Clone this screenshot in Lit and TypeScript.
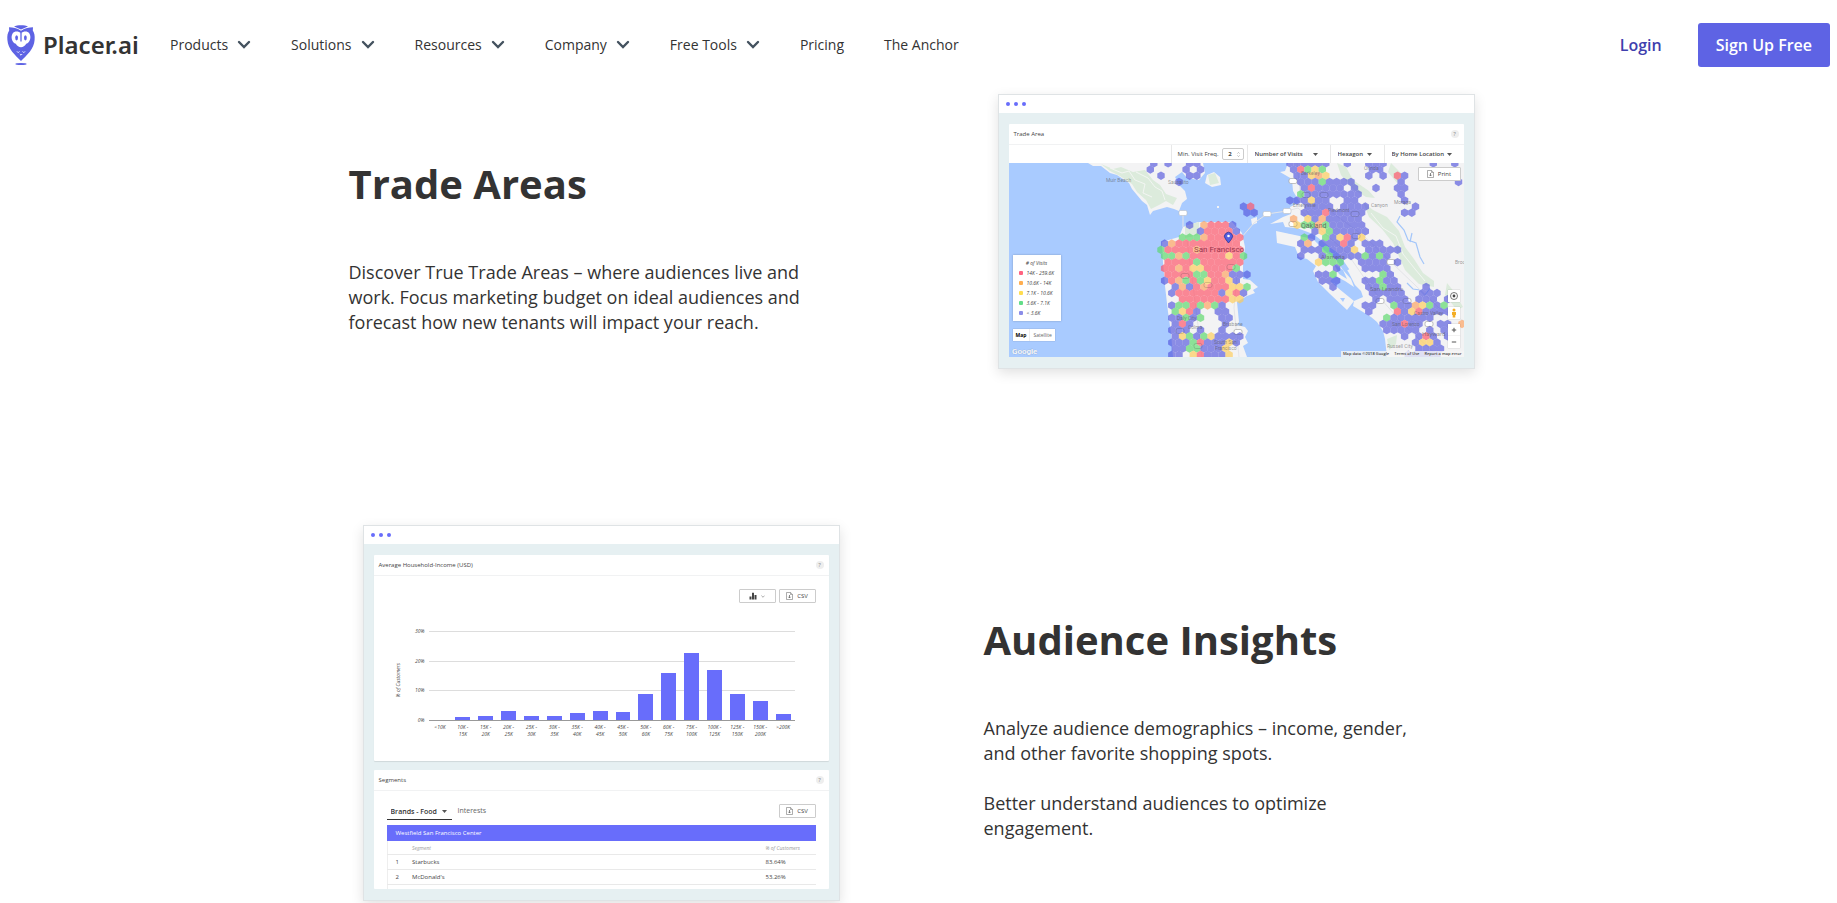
import { LitElement, html, css, svg } from "lit";
import { customElement } from "lit/decorators.js";

const chevron = html`<svg class="chevron" viewBox="0 0 14 10" width="14" height="10" aria-hidden="true">
  <path d="M2 2 L7 7 L12 2" fill="none" stroke="#44525f" stroke-width="2.4" stroke-linecap="round" stroke-linejoin="miter" />
</svg>`;

const caret = html`<svg class="caret" viewBox="0 0 5 3" width="5" height="3" aria-hidden="true"><path d="M0 0H5L2.5 3Z" fill="#555" /></svg>`;

const fileIcon = html`<svg viewBox="0 0 7 8" width="7" height="8" aria-hidden="true">
  <path d="M.5 .5H4.6L6.5 2.4V7.5H.5Z M4.5 .5V2.5H6.5" fill="none" stroke="#777" stroke-width=".6" />
  <path d="M3.5 3V5.8M2.4 4.8L3.5 6L4.6 4.8" fill="none" stroke="#555" stroke-width=".7" />
</svg>`;

@customElement("site-header")
export class SiteHeader extends LitElement {
  static styles = css`
    :host { display: block; background: #fff; }
    header { display: flex; align-items: center; height: 90px; padding: 0 7px; box-sizing: border-box; }
    a { text-decoration: none; color: #333; }
    .logo { display: flex; align-items: center; gap: 8px; width: 142px; font-family: "Noto Sans", "Open Sans", sans-serif; font-weight: 600; font-size: 24px; line-height: 36px; white-space: nowrap; }
    nav { display: flex; gap: 40px; padding-left: 21px; }
    .item { display: flex; align-items: center; gap: 9px; border: 0; background: none; padding: 0; margin: 0; font-family: "Open Sans", sans-serif; font-size: 14px; line-height: 20px; color: #333; cursor: pointer; white-space: nowrap; }
    .right { display: flex; align-items: center; gap: 36px; margin-left: auto; font-size: 16px; font-weight: 600; }
    .login { color: #3f3fae; }
    .signup { background: #5e63e4; color: #fff; border-radius: 3px; padding: 0 18px; line-height: 44px; }
  `;
  render() {
    const menus = ["Products", "Solutions", "Resources", "Company", "Free Tools"];
    return html`<header>
      <a class="logo" href="#home" aria-label="Placer.ai">
        <svg viewBox="0 0 28 40" width="28" height="40" aria-hidden="true">
          <path d="M7 1.6 C10 -.2 18 -.2 21 1.6 L14 4.4Z" fill="#5e63e4" />
          <path d="M2 2.2 C6 2.4 10 2.6 14 5.8 C18 2.6 22 2.4 26 2.2 L25.8 5.6 C27.4 8 28 11 27.6 15 C27 24 20 30 14 36 C8 30 1 24 .4 15 C0 11 .6 8 2.2 5.6Z" fill="#5e63e4" />
          <path d="M14 8.4 C11.6 5.8 7.5 5.8 5.6 8.4 C3.4 12 5 17.400 8.800 18.800 C10 21.200 12 22.200 14 22.200 C16 22.200 18 21.200 19.200 18.800 C23 17.400 24.600 12 22.400 8.400 C20.500 5.800 16.400 5.800 14 8.400Z" fill="#fff" />
          <path d="M14 8 V16.600" stroke="#5e63e4" stroke-width="1.300" />
          <ellipse cx="9.600" cy="12.800" rx="1.400" ry="2.600" fill="#5e63e4" />
          <ellipse cx="18.400" cy="12.800" rx="1.400" ry="2.600" fill="#5e63e4" />
          <path d="M10 26.400L11.200 27.600L12.400 26.400 M15.600 26.400L16.800 27.600L18 26.400 M12.800 29L14 30.200L15.200 29" fill="none" stroke="#fff" stroke-width=".9" />
          <ellipse cx="14" cy="39" rx="5.600" ry="1" fill="#5e63e4" />
        </svg>
        <span>Placer.ai</span>
      </a>
      <nav aria-label="Main">
        ${menus.map((m) => html`<button class="item" type="button">${m}${chevron}</button>`)}
        <a class="item" href="#pricing">Pricing</a>
        <a class="item" href="#anchor">The Anchor</a>
      </nav>
      <div class="right">
        <a class="login" href="#login">Login</a>
        <a class="signup" href="#signup">Sign Up Free</a>
      </div>
    </header>`;
  }
}

@customElement("browser-frame")
export class BrowserFrame extends LitElement {
  static styles = css`
    :host { display: block; box-sizing: border-box; background: #e6f0f2; border: 1px solid #dfe3e5; box-shadow: 0 4px 12px rgba(0, 0, 0, 0.12); }
    .bar { display: flex; align-items: center; gap: 4px; height: 18px; padding-left: 7px; background: #fff; }
    .dot { width: 4px; height: 4px; border-radius: 50%; background: #686dfb; }
    .body { display: flex; flex-direction: column; gap: 9px; padding: 11px 10px; }
  `;
  render() {
    return html`<div class="bar"><i class="dot"></i><i class="dot"></i><i class="dot"></i></div>
      <div class="body"><slot></slot></div>`;
  }
}

const panelStyles = css`
  :host { display: block; font-family: "Open Sans", sans-serif; font-size: 6px; line-height: 8px; color: #444; }
  .panel { background: #fff; border-radius: 1px; }
  .head { display: flex; align-items: center; justify-content: space-between; height: 20px; padding: 0 5px; border-bottom: 1px solid #f1f2f3; }
  .head h3 { margin: 0; font-size: 6px; font-weight: 500; }
  button, select, input { font-family: inherit; font-size: 6px; line-height: 8px; color: inherit; margin: 0; padding: 0; border: 0; background: none; }
  .help { width: 8px; height: 8px; border-radius: 50%; background: #eee; color: #888; text-align: center; }
  .btn { display: flex; align-items: center; justify-content: center; gap: 4px; box-sizing: border-box; width: 37px; height: 14px; border: 1px solid #ccc; border-radius: 1px; background: #fff; }
  select { appearance: none; font-weight: 600; }
`;

const COLOURS: Record<string, string> = { b: "#5457de", r: "#ff5065", g: "#58d868", y: "#ffcc55", o: "#ffa05c" };

// Each row lists runs of cells as [first column, colour letters]; "." leaves a cell empty.
const HEX_ROWS: [number, string][][] = [
  [[0, "b"], [2, "b"], [5, "bb"], [19, "bbbbbb"], [27, "b"], [30, "bbb"], [39, "b"], [42, "b"]],
  [[0, "b"], [5, "b.b"], [20, "brgyg"], [31, "bb"]],
  [[1, "b"], [5, "bb"], [20, "bbyoy"], [30, "b.b"], [34, "rb"]],
  [[4, "b"], [21, "bbbgbbbb"], [35, "b"], [43, "b"]],
  [[21, "brbbbb.b"], [31, "b"], [34, "bb"]],
  [[21, "gbbbbbbbb"], [35, "b"]],
  [[19, "bbbybb..bb"], [35, "b"]],
  [[13, "br"], [22, "bbbb.bbbb"], [37, "b"]],
  [[13, "bb"], [21, "bbbrbbbbb"], [35, "bb"]],
  [[20, "o.ybobbbbb"]],
  [[5, "b.orrrb"], [20, "yggogbbbbb"]],
  [[7, "brrrrb"], [23, "bygbbbbb"]],
  [[4, "gggorrrrr"], [21, "gb.gbyrby"]],
  [[2, "borrrrrrrrr"], [21, "bo.bbbrb.bbb"]],
  [[1, "grrrrorrrrrr"], [21, "bbbgbbby.bbbbb"]],
  [[2, "ggogrrrrryrg"], [21, "b..bgbbbbgbgb"]],
  [[2, "rrrrgrrrrrr"], [23, "yggg..bbbb.b"]],
  [[2, "rroryyrrrrg"], [26, "b...bbbb"]],
  [[2, "rrrrggrrobbb"], [23, "bbg......gb"]],
  [[2, "brogrgyrryb"], [24, "bbb...bbgbb"]],
  [[3, "bobrorrryyg"], [25, "b....bbgbb...b"]],
  [[3, "brrrrrrbyrb"], [31, "bbbbb..bbb"]],
  [[4, "rrrrrrryy"], [31, "b.bbb.bbb.b"]],
  [[3, "bggrgogb"], [30, "bb..gbboygbg"]],
  [[3, "gyrb..bb"], [30, "b...rbyrbbbb"]],
  [[3, "bbgbg..bb"], [33, "gbbbbbb"]],
  [[3, "brb....b"], [32, "bbbrbb..bb.o"]],
  [[3, "bbb.b..b"], [33, "bbbbb.b.bb"]],
  [[3, "bygbgybbbb"], [35, "b.brb.bb"]],
  [[3, "bbbgrbbbyb"], [37, "byyb"]],
  [[3, "bbggbbby"], [37, "bbbb"]],
  [[3, "bb.yrbbby"], [36, "bbbbb"]],
];

const PLACES: [string, number, number, number][] = [
  ["Muir Beach", 97, 19, 5], ["Sausalito", 159, 21, 5], ["Orinda", 355, 7, 5], ["Berkeley", 292, 12, 5],
  ["Emeryville", 284, 44, 5], ["Piedmont", 319, 49, 5], ["Canyon", 362, 44, 5], ["Moraga", 385, 41, 5],
  ["Alameda", 312, 96, 6], ["San Leandro", 361, 128, 6], ["Castro Valley", 405, 152, 5],
  ["San Lorenzo", 383, 163, 5], ["Hayward", 413, 173, 6], ["Russell City", 378, 185, 5], ["Daly City", 168, 157, 5],
  ["Colma", 179, 166, 5], ["Brisbane", 214, 163, 5], ["South San", 205, 181, 5], ["Francisco", 206, 187, 5], ["Broc", 446, 101, 5],
];

const SHIELDS: [number, number][] = [
  [174, 50], [258, 51], [278, 48], [284, 18], [284, 61], [222, 104], [176, 113], [199, 122], [229, 169], [297, 32], [315, 32],
  [346, 51], [347, 73], [382, 99], [371, 138], [398, 138], [420, 161], [171, 168], [189, 183],
];

@customElement("trade-area-map")
export class TradeAreaMap extends LitElement {
  static styles = [panelStyles, css`
    .toolbar { display: grid; grid-template-columns: 1fr 76px 83px 54px 80px; height: 18px; }
    .cell { display: flex; align-items: center; justify-content: space-between; padding: 0 12px 0 7px; border-left: 1px solid #e8e8e8; white-space: nowrap; }
    .cell.first { border: 0; }
    .cell.freq { padding: 0 6px; gap: 3px; }
    .stepper { display: flex; align-items: center; gap: 2px; box-sizing: border-box; width: 22px; height: 12px; border: 1px solid #ccc; border-radius: 2px; padding: 0 3px; }
    .stepper input { width: 9px; font-weight: 700; text-align: center; }
    .map { position: relative; overflow: hidden; }
    .canvas { display: block; width: 100%; }
    .legend { position: absolute; left: 4px; top: 92px; width: 48px; box-sizing: border-box; background: #fff; padding: 4px 0 4px 6px; font-style: italic; box-shadow: 0 0 2px rgba(0, 0, 0, 0.25); }
    .legend ul { list-style: none; margin: 0; padding: 0; }
    .legend li { display: flex; align-items: center; gap: 4px; height: 9px; white-space: nowrap; margin-top: 1px; font-size: 5px; }
    .legend p { margin: 0; text-align: center; font-size: 5px; padding-right: 6px; }
    .key { width: 4px; height: 4px; border-radius: 1px; }
    .key.r { background: #ff6380; } .key.o { background: #ffae50; } .key.y { background: #ffdc50; } .key.g { background: #63dd88; } .key.b { background: #8b8de8; }
    .types { position: absolute; left: 4px; top: 166px; display: flex; background: #fff; height: 12px; box-shadow: 0 0 1px rgba(0, 0, 0, 0.3); }
    .types button { font-size: 5px; padding: 0 3px; color: #666; }
    .types .on { color: #000; font-weight: 700; border-right: 1px solid #eee; }
    .print { position: absolute; right: 3px; top: 4px; width: 43px; }
    .controls { position: absolute; right: 4px; top: 127px; display: flex; flex-direction: column; gap: 5px; }
    .controls button { display: block; width: 12px; height: 12px; background: #fff; box-shadow: 0 0 1px rgba(0, 0, 0, 0.3); }
    .controls svg { display: block; }
    .attribution { position: absolute; right: 0; bottom: 0; display: flex; gap: 5px; padding: 0 2px; background: rgba(245, 245, 245, 0.8); font-size: 4px; line-height: 6px; font-weight: 600; }
    .attribution a { color: inherit; text-decoration: none; }
  `];

  private hexes() {
    const out = [];
    for (let r = 0; r < HEX_ROWS.length; r++) {
      for (const [start, run] of HEX_ROWS[r]) {
        for (let i = 0; i < run.length; i++) {
          if (run[i] === ".") continue;
          const x = (r % 2 ? 141.3 : 144.8) + 7.167 * (start + i);
          const y = 0.33 + 6.177 * r;
          out.push(svg`<use href="#hex" x=${x.toFixed(1)} y=${y.toFixed(1)} fill=${COLOURS[run[i]]} />`);
        }
      }
    }
    return out;
  }

  render() {
    return html`<section class="panel">
      <div class="head"><h3>Trade Area</h3><button class="help" type="button" aria-label="Help">?</button></div>
      <div class="toolbar">
        <div class="cell first"></div>
        <div class="cell freq"><label for="freq">Min. Visit Freq.</label>
          <span class="stepper"><input id="freq" type="text" inputmode="numeric" value="2" />
            <svg viewBox="0 0 4 7" width="4" height="7" aria-hidden="true"><path d="M.5 2.3L2 .8L3.5 2.3M.5 4.7L2 6.2L3.5 4.7" fill="none" stroke="#777" stroke-width=".6" /></svg></span></div>
        <div class="cell"><select aria-label="Metric"><option>Number of Visits</option></select>${caret}</div>
        <div class="cell"><select aria-label="Shape"><option>Hexagon</option></select>${caret}</div>
        <div class="cell"><select aria-label="Origin"><option>By Home Location</option></select>${caret}</div>
      </div>
      <div class="map">
        <svg class="canvas" viewBox="0 0 455 194" role="img" aria-label="Visits around San Francisco Bay">
          <defs><path id="hex" d="M0 -4.25L3.7 -2.1V2.1L0 4.25L-3.7 2.1V-2.1Z" /></defs>
          <rect width="455" height="194" fill="#a9cbff" />
          <g fill="#f3f3f4">
            <path d="M79 0L84 3L92 3L101 10L108 12L120 20L123 26L133 38L138 42L141 52L144 48L158 44L165 46L170 48L173 40L178 36L176 28L171 23L166 14L173 9L178 15L190 17L196 10L194 0Z" />
            <path d="M153 79L156 78L170 74L174 64L189 59L223 59L233 70L236 84L234 103L234 116L241 117L249 124L244 127L246 130L238 133L228 139L230 159L228 162L236 164L239 168L236 174L239 180L234 183L238 194H164L162 170L159 149L156 123L154 100Z" />
            <path d="M198 12L205 9L211 14L212 22L203 24L196 20Z M242 56L248 54L248 60L243 62Z M208 43h2v2h-2Z" />
            <path d="M279 0L276 8L271 9L283 16L284 28L287 33L291 39L281 44L282 51L274 54L261 61L274 59L276 64L288 65L304 71L316 80L328 91L336 104L340 110L346 122L352 128L354 134L345 138L344 143L354 149L362 154L368 159L374 168L376 176L378 194H455V0Z" />
            <path d="M267 68L286 72L304 76L316 88L326 95L334 107L342 116L345 124L336 118L326 113L321 118L329 125L345 138L338 147L321 131L309 119L304 108L307 103L298 96L290 94L286 84L268 80Z" />
          </g>
          <path d="M331 135L336 135L334 139Z M325 101L334 107L338 116L330 111Z" fill="#a9cbff" />
          <g fill="#dcebdc">
            <path d="M92 1L104 6L112 4L124 9L136 7L144 17L151 22L157 31L168 35L164 42L157 38L150 42L142 46L137 37L128 29L123 21L111 13L101 8Z" />
            <path d="M176 63L190 59L190 72L176 75Z M199 12L206 10L210 20L201 22Z" />
            <path d="M354 39L364 47L378 54L390 68L396 84L405 96L414 110L425 118L425 124L410 121L396 107L389 91L384 80L373 66L360 54Z" />
            <path d="M328 0L337 4L344 17L360 28L366 35L357 34L344 26L332 12Z M382 0L392 10L388 20L379 9Z M378 176L388 172L387 181L380 187Z M438 120L446 130L454 144L448 147L436 132Z" />
          </g>
          <g fill="none" stroke="#f7f7f7" stroke-width=".8">
            <path d="M101 5L113 10L120 8L126 17L136 21L134 30L143 34M127 9L139 15L146 24L153 28L156 37M362 50L374 65L387 73L394 91L406 106L416 118" />
          </g>
          <g fill="none" stroke="#a3c6fa" stroke-width="1.2">
            <path d="M391 53L388 59L395 67L399 77L407 80L411 94L415 101M403 70L401 79M398 120L404 126L411 127L416 132L421 125" />
            <path d="M276 68L304 73L316 83L328 91L339 107" stroke="#a9cbff" stroke-width="3" />
          </g>
          <g fill="none" stroke="#e3e4e8" stroke-width="1">
            <path d="M174 50L174 64M232 75L245 60L258 51L278 48L289 45L300 55M288 0L292 37L305 61L338 90L363 126L396 163L430 194M321 48L355 73L382 99L430 145L455 158M178 77L185 130L193 194M228 112L225 145L230 194" />
          </g>
          <g fill="#fff" stroke="#b7b7b7" stroke-width=".5">${SHIELDS.map(([x, y]) => svg`<rect x=${x - 4} y=${y - 2.5} width="8" height="5" rx="1.5" />`)}</g>
          <g opacity=".66">${this.hexes()}</g>
          <g fill="none" stroke="#666" stroke-opacity=".4" stroke-width=".5">${SHIELDS.slice(3).map(([x, y]) => svg`<rect x=${x - 4} y=${y - 2.5} width="8" height="5" rx="2" />`)}</g>
          <g fill="#555" fill-opacity=".6" font-family="Roboto, sans-serif">
            ${PLACES.map(([name, x, y, size]) => svg`<text x=${x} y=${y} font-size=${size}>${name}</text>`)}
            <text x="185" y="89" font-size="8" fill="#7c2038" fill-opacity=".8">San Francisco</text>
            <text x="292" y="65" font-size="7" fill-opacity=".8">Oakland</text>
          </g>
          <path d="M219.500 80L216.500 76A4 4 0 1 1 222.500 76Z" fill="#5560e0" stroke="#303796" stroke-width=".8" />
          <circle cx="219.500" cy="73" r="1.300" fill="#fff" />
          <text x="3" y="191" font-family="Roboto, sans-serif" font-size="8" font-weight="500" fill="#fff" stroke="#8aa5c8" stroke-width=".5" paint-order="stroke">Google</text>
        </svg>
        <div class="legend"><p># of Visits</p>
          <ul>
            <li><i class="key r"></i>14K - 259.6K</li>
            <li><i class="key o"></i>10.6K - 14K</li>
            <li><i class="key y"></i>7.1K - 10.6K</li>
            <li><i class="key g"></i>3.6K - 7.1K</li>
            <li><i class="key b"></i>&lt; 3.6K</li>
          </ul>
        </div>
        <div class="types"><button class="on" type="button">Map</button><button type="button">Satellite</button></div>
        <button class="btn print" type="button">${fileIcon}Print</button>
        <div class="controls">
          <button type="button" aria-label="My location"><svg viewBox="0 0 12 12" width="12" height="12"><circle cx="6" cy="6" r="3.5" fill="none" stroke="#555" stroke-width=".8" /><circle cx="6" cy="6" r="1.4" fill="#444" /></svg></button>
          <button type="button" aria-label="Street view"><svg viewBox="0 0 12 12" width="12" height="12"><circle cx="6" cy="3" r="1.500" fill="#f3ad25" /><path d="M4 5H8V8H7.300V10.500H4.700V8H4Z" fill="#f3ad25" /></svg></button>
          <div>
            <button type="button" aria-label="Zoom in"><svg viewBox="0 0 12 12" width="12" height="12"><path d="M3.800 6H8.200M6 3.800V8.200" stroke="#555" stroke-width="1" /></svg></button>
            <button type="button" aria-label="Zoom out"><svg viewBox="0 0 12 12" width="12" height="12"><path d="M3.800 6H8.200" stroke="#555" stroke-width="1" /></svg></button>
          </div>
        </div>
        <div class="attribution"><span>Map data ©2018 Google</span><a href="#terms">Terms of Use</a><a href="#report">Report a map error</a></div>
      </div>
    </section>`;
  }
}

const INCOME: [string, number][] = [
  ["<10K", 0], ["10K - 15K", 1.1], ["15K - 20K", 1.5], ["20K - 25K", 3], ["25K - 30K", 1.5], ["30K - 35K", 1.5],
  ["35K - 40K", 2.3], ["40K - 45K", 3.2], ["45K - 50K", 2.8], ["50K - 60K", 8.8], ["60K - 75K", 16], ["75K - 100K", 22.7],
  ["100K - 125K", 17.1], ["125K - 150K", 8.8], ["150K - 200K", 6.4], [">200K", 1.9],
];

@customElement("income-chart")
export class IncomeChart extends LitElement {
  static styles = [panelStyles, css`
    .panel { height: 206px; box-shadow: 0 1px 1px rgba(0, 0, 0, 0.1); }
    .tools { display: flex; justify-content: flex-end; gap: 3px; padding: 13px 13px 0 0; }
    .chart { display: grid; grid-template-columns: 12px 14px 1fr; column-gap: 4px; padding: 25px 34px 0 21px; font-size: 5px; line-height: 7px; font-style: italic; }
    .axis { writing-mode: vertical-rl; transform: rotate(180deg); text-align: left; align-self: end; padding-top: 27px; padding-bottom: 4px; }
    .ticks { display: flex; flex-direction: column; justify-content: space-between; height: 96px; text-align: right; }
    .plot { display: grid; grid-template-columns: repeat(16, 1fr); align-items: end; height: 90px; margin-top: 3px; box-sizing: border-box; border-bottom: 1px solid #999;
      background: linear-gradient(#ddd, #ddd) 0 0 / 100% 1px no-repeat, linear-gradient(#ddd, #ddd) 0 30px / 100% 1px no-repeat, linear-gradient(#ddd, #ddd) 0 59px / 100% 1px no-repeat; }
    .bar { margin: 0 4px; background: #686dfb; }
    .labels { grid-column: 3; display: grid; grid-template-columns: repeat(16, 1fr); text-align: center; }
    .labels span { padding: 0 3px; }
  `];
  render() {
    return html`<section class="panel">
      <div class="head"><h3>Average Household-Income (USD)</h3><button class="help" type="button" aria-label="Help">?</button></div>
      <div class="tools">
        <button class="btn" type="button" aria-label="Chart type">
          <svg viewBox="0 0 8 8" width="8" height="8"><path d="M.5 7.500V4.500H2.500V7.500ZM3 7.500V.8H5V7.500ZM5.500 7.500V3H7.500V7.500Z" fill="#444" /></svg>
          <svg viewBox="0 0 4 3" width="4" height="3"><path d="M.4 .6L2 2.200L3.600 .6" fill="none" stroke="#777" stroke-width=".6" /></svg>
        </button>
        <button class="btn" type="button">${fileIcon}CSV</button>
      </div>
      <div class="chart">
        <div class="axis">% of Customers</div>
        <div class="ticks"><span>30%</span><span>20%</span><span>10%</span><span>0%</span></div>
        <div class="plot">${INCOME.map(([, v]) => html`<div class="bar" style="height:${Math.round(v * 2.95)}px"></div>`)}</div>
        <div class="labels">${INCOME.map(([l]) => html`<span>${l}</span>`)}</div>
      </div>
    </section>`;
  }
}

@customElement("segment-list")
export class SegmentList extends LitElement {
  static styles = [panelStyles, css`
    .panel { height: 119px; overflow: hidden; }
    .tabs { display: flex; padding: 13px 13px 0; height: 21px; box-sizing: content-box; }
    .tab { display: flex; align-items: center; height: 15px; gap: 4px; margin-right: 2px; padding: 0 5px 0 4px; font-size: 7px; line-height: 12px; border-bottom: 1px solid transparent; color: #666; }
    .tab select { font-size: 7px; line-height: 12px; color: #333; }
    .tab.on { border-color: #333; }
    .btn { margin-left: auto; }
    table { width: calc(100% - 26px); margin: 0 13px; border-collapse: collapse; border-left: 1px solid #eee; text-align: left; }
    caption { background: #686dfb; color: #fff; text-align: left; padding: 0 9px; line-height: 16px; font-weight: 500; }
    th { font-weight: 400; font-style: italic; font-size: 5px; color: #999; }
    th, td { padding: 0; height: 14px; border-bottom: 1px solid #e9e9e9; }
    thead th { height: 13px; }
    .num { width: 25px; padding-left: 8px; box-sizing: border-box; }
    .pct { width: 50px; }
  `];
  render() {
    return html`<section class="panel">
      <div class="head"><h3>Segments</h3><button class="help" type="button" aria-label="Help">?</button></div>
      <div class="tabs">
        <span class="tab on"><select aria-label="Segment group"><option>Brands - Food</option></select>${caret}</span>
        <button class="tab" type="button">Interests</button>
        <button class="btn" type="button">${fileIcon}CSV</button>
      </div>
      <table>
        <caption>Westfield San Francisco Center</caption>
        <thead><tr><th class="num"></th><th>Segment</th><th class="pct">% of Customers</th></tr></thead>
        <tbody>
          <tr><td class="num">1</td><td>Starbucks</td><td>83.64%</td></tr>
          <tr><td class="num">2</td><td>McDonald's</td><td>53.26%</td></tr>
          <tr><td></td><td></td><td></td></tr>
        </tbody>
      </table>
    </section>`;
  }
}

@customElement("app-root")
export class AppRoot extends LitElement {
  static styles = css`
    :host { display: block; background: #fff; font-family: "Open Sans", sans-serif; color: #333; }
    main { max-width: 1140px; margin: 0 auto; padding: 4px 0; display: grid; row-gap: 156px; }
    .feature { display: grid; grid-template-columns: repeat(2, minmax(0, 1fr)); column-gap: 130px; align-items: center; }
    browser-frame { margin: 0 14px; }
    h2 { margin: 26px 0 47px; font-size: 40px; line-height: 58px; font-weight: 700; }
    p { margin: 0; max-width: 456px; font-size: 18px; line-height: 25px; }
    p + p { margin-top: 25px; }
  `;
  render() {
    return html`<site-header></site-header>
      <main>
        <section class="feature">
          <div>
            <h2>Trade Areas</h2>
            <p>Discover True Trade Areas – where audiences live and work. Focus marketing budget on ideal audiences and forecast how new tenants will impact your reach.</p>
          </div>
          <browser-frame><trade-area-map></trade-area-map></browser-frame>
        </section>
        <section class="feature">
          <browser-frame><income-chart></income-chart><segment-list></segment-list></browser-frame>
          <div>
            <h2>Audience Insights</h2>
            <p>Analyze audience demographics – income, gender, and other favorite shopping spots.</p>
            <p>Better understand audiences to optimize engagement.</p>
          </div>
        </section>
      </main>`;
  }
}
